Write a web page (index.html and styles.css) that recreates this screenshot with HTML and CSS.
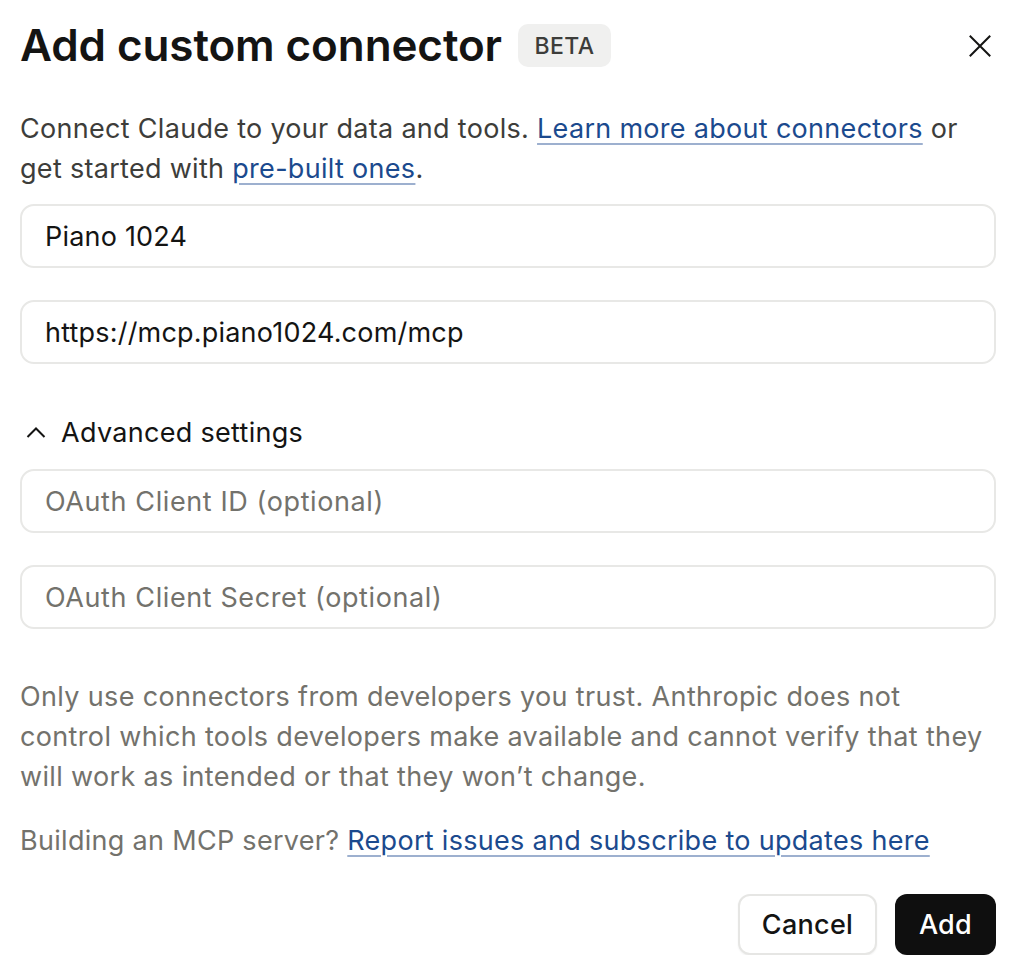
FILE: index.html
```html
<!DOCTYPE html>
<html lang="en">
<head>
<meta charset="utf-8">
<title>Add custom connector</title>
<link rel="stylesheet" href="styles.css">
</head>
<body>
<div class="dialog">
  <div class="header">
    <h1 class="title">Add custom connector</h1>
    <span class="badge">BETA</span>
    <button class="close" aria-label="Close">
      <svg width="22" height="22" viewBox="0 0 22 22" fill="none" stroke="#141413" stroke-width="2" stroke-linecap="square"><path d="M1.5 1.5L20.5 20.5M20.5 1.5L1.5 20.5"/></svg>
    </button>
  </div>
  <p class="intro">Connect Claude to your data and tools. <a href="#" class="link">Learn more about connectors</a> or get started with <a href="#" class="link">pre-built ones</a>.</p>
  <div class="field field-first"><span class="value">Piano 1024</span></div>
  <div class="field"><span class="value">https://mcp.piano1024.com/mcp</span></div>
  <div class="advanced">
    <svg class="chev" width="20" height="12" viewBox="0 0 20 12" fill="none" stroke="#141413" stroke-width="2"><path d="M1.5 11L10 2.5L18.5 11"/></svg>
    <span>Advanced settings</span>
  </div>
  <div class="field field-adv"><span class="placeholder">OAuth Client ID (optional)</span></div>
  <div class="field"><span class="placeholder">OAuth Client Secret (optional)</span></div>
  <p class="warning">Only use connectors from developers you trust. Anthropic does not control which tools developers make available and cannot verify that they will work as intended or that they won’t change.</p>
  <p class="building">Building an MCP server? <a href="#" class="link">Report issues and subscribe to updates here</a></p>
  <div class="actions">
    <button class="btn btn-cancel">Cancel</button>
    <button class="btn btn-add">Add</button>
  </div>
</div>
</body>
</html>
```
FILE: styles.css
```css
html, body {
  margin: 0;
  padding: 0;
  background: #ffffff;
}
body {
  font-family: Inter, "Noto Sans", sans-serif;
  color: #141413;
}
.dialog {
  width: 976px;
  padding: 24px 0 0 20px;
  display: flex;
  flex-direction: column;
}
.header {
  display: flex;
  align-items: center;
  height: 43px;
}
.title {
  margin: 0;
  font-size: 44px;
  font-weight: 600;
  letter-spacing: -0.1px;
  line-height: 43px;
  color: #141413;
}
.badge {
  margin-left: 16px;
  height: 43px;
  width: 93px;
  box-sizing: border-box;
  display: flex;
  align-items: center;
  justify-content: center;
  background: #f0f0ef;
  border-radius: 10px;
  font-size: 23px;
  font-weight: 500;
  color: #3d3d3a;
  letter-spacing: 0.4px;
}
.close {
  margin-left: auto;
  margin-right: 5px;
  background: none;
  border: none;
  padding: 0;
  width: 22px;
  height: 22px;
  display: flex;
}
.intro {
  margin: 42px 0 0;
  font-size: 27px;
  line-height: 40px;
  color: #3d3d3a;
  letter-spacing: 0.3px;
}
.link {
  color: #1b4a8e;
  text-decoration: underline;
  text-decoration-color: #9db0cf;
  text-decoration-thickness: 2px;
  text-underline-offset: 5px;
}
.field {
  height: 64px;
  box-sizing: border-box;
  border: 2px solid #e8e8e6;
  border-radius: 14px;
  display: flex;
  align-items: center;
  padding-left: 23px;
  font-size: 27px;
  margin-top: 32px;
}
.field-first {
  margin-top: 15px;
}
.value {
  color: #141413;
  letter-spacing: 0.2px;
}
.placeholder {
  color: #73726c;
  letter-spacing: 0.6px;
}
.advanced {
  margin-top: 48px;
  height: 40px;
  display: flex;
  align-items: center;
  font-size: 27px;
  color: #141413;
  letter-spacing: 0.3px;
}
.chev {
  margin-left: 6px;
  margin-right: 15px;
}
.field-adv {
  margin-top: 17px;
}
.warning {
  margin: 48px 0 0;
  font-size: 27px;
  line-height: 40px;
  color: #73726c;
  letter-spacing: 0.35px;
}
.building {
  margin: 24px 0 0;
  font-size: 27px;
  line-height: 40px;
  color: #73726c;
  letter-spacing: 0.3px;
}
.actions {
  margin-top: 33px;
  display: flex;
  justify-content: flex-end;
  gap: 18px;
}
.btn {
  height: 61px;
  border-radius: 12px;
  font-family: Inter, "Noto Sans", sans-serif;
  font-size: 27px;
  font-weight: 500;
  padding: 0;
  cursor: pointer;
  letter-spacing: 0.3px;
}
.btn-cancel {
  width: 139px;
  background: #ffffff;
  border: 2px solid #e6e6e4;
  color: #141413;
  box-shadow: 0 1px 2px rgba(0,0,0,0.06);
}
.btn-add {
  width: 101px;
  background: #0f0f0f;
  border: none;
  color: #ffffff;
}
```
